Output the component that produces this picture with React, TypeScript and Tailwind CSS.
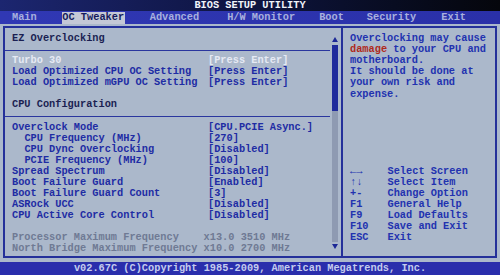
import React from "react";

const mono = { fontFamily: '"Liberation Mono", "DejaVu Sans Mono", monospace' };

type Row = { label: string; value?: string; indent?: boolean; kind?: "sel" | "grey" };

const rowsA: Row[] = [
  { label: "Turbo 30", value: "[Press Enter]", kind: "sel" },
  { label: "Load Optimized CPU OC Setting", value: "[Press Enter]" },
  { label: "Load Optimized mGPU OC Setting", value: "[Press Enter]" },
];

const rowsB: Row[] = [
  { label: "Overclock Mode", value: "[CPU.PCIE Async.]" },
  { label: "CPU Frequency (MHz)", value: "[270]", indent: true },
  { label: "CPU Dync Overclocking", value: "[Disabled]", indent: true },
  { label: "PCIE Frequency (MHz)", value: "[100]", indent: true },
  { label: "Spread Spectrum", value: "[Disabled]" },
  { label: "Boot Failure Guard", value: "[Enabled]" },
  { label: "Boot Failure Guard Count", value: "[3]" },
  { label: "ASRock UCC", value: "[Disabled]" },
  { label: "CPU Active Core Control", value: "[Disabled]" },
];

function RowLine({ r }: { r: Row }) {
  const color = r.kind === "sel" ? "text-[#e6eaf4]" : "text-[#1e2ca4]";
  return (
    <div className={`flex h-[11px] items-center whitespace-pre ${color}`}>
      <div className={`w-[196px] ${r.indent ? "pl-[12.4px]" : ""}`}>{r.label}</div>
      <div>{r.value}</div>
    </div>
  );
}

const keys: [string, string][] = [
  ["←→", "Select Screen"],
  ["↑↓", "Select Item"],
  ["+-", "Change Option"],
  ["F1", "General Help"],
  ["F9", "Load Defaults"],
  ["F10", "Save and Exit"],
  ["ESC", "Exit"],
];

export default function App() {
  return (
    <div
      className="w-[500px] h-[275px] overflow-hidden flex flex-col font-bold text-[10.3px] leading-[11px] bg-[#abb8cb]"
      style={mono}
    >
      {/* title */}
      <div className="h-[11px] flex items-center justify-center bg-gradient-to-r from-[#1c2670] via-[#0e1440] to-[#05060c] text-[#f2f4fa]">
        BIOS SETUP UTILITY
      </div>
      {/* menu */}
      <div className="h-[13px] flex items-center bg-gradient-to-r from-[#3038b4] to-[#2a30a8] text-[#a8b0de] whitespace-pre">
        <div className="ml-[12px]">Main</div>
        <div className="ml-[25px] w-[63px] h-[12px] flex items-center justify-center bg-[#c4c8d6] text-[#141a5c]">OC Tweaker</div>
        <div className="ml-[25px]">Advanced</div>
        <div className="ml-[28px]">H/W Monitor</div>
        <div className="ml-[24px]">Boot</div>
        <div className="ml-[23px]">Security</div>
        <div className="ml-[25px]">Exit</div>
      </div>
      {/* main */}
      <div className="h-[238px] pt-[2px] px-[3px] pb-[4px]">
        <div className="h-full flex border-2 border-[#24309a]">
          {/* left panel */}
          <div className="w-[336px] flex">
            <div className="w-[325px] flex flex-col">
              <div className="pl-[7px] pt-[4.5px] h-[15.5px] text-[#1a1f52] flex items-start">
                <div className="h-[11px] flex items-center">EZ Overclocking</div>
              </div>
              <div className="mt-[6px] h-[1px] bg-[#2a369e]" />
              <div className="pl-[7px] mt-[4px]">
                {rowsA.map((r) => (
                  <RowLine key={r.label} r={r} />
                ))}
                <div className="h-[11px]" />
                <div className="h-[11px] flex items-center text-[#1a1f52]">CPU Configuration</div>
              </div>
              <div className="mt-[6px] h-[1px] bg-[#2a369e]" />
              <div className="pl-[7px] mt-[5px]">
                {rowsB.map((r) => (
                  <RowLine key={r.label} r={r} />
                ))}
                <div className="h-[11px]" />
                <div className="h-[11px] flex items-center whitespace-pre text-[#6f7a94]">
                  {"Processor Maximum Frequency    x13.0 3510 MHz"}
                </div>
                <div className="h-[11px] flex items-center whitespace-pre text-[#6f7a94]">
                  {"North Bridge Maximum Frequency x10.0 2700 MHz"}
                </div>
              </div>
            </div>
            {/* scrollbar */}
            <div className="w-[11px] flex flex-col items-start pl-[2px] pt-[7px] pb-[6px]">
              <div className="w-[6px] h-[8px] flex items-center justify-center">
                <svg width="6" height="5" viewBox="0 0 6 5">
                  <path d="M3 0 L6 5 L0 5 Z" fill="#1c2896" />
                </svg>
              </div>
              <div className="w-[6px] h-[66px] bg-[#1e2a9c] mt-[2px]" />
              <div className="w-[6px] flex-1 bg-[#8e9ab2]" />
              <div className="w-[6px] h-[8px] flex items-center justify-center">
                <svg width="6" height="5" viewBox="0 0 6 5">
                  <path d="M0 0 L6 0 L3 5 Z" fill="#1c2896" />
                </svg>
              </div>
            </div>
          </div>
          {/* right panel */}
          <div className="flex-1 border-l-2 border-[#24309a] pl-[7px] pt-[4.5px] flex flex-col text-[#2232b0]">
            <div className="leading-[11.2px]">
              <div>Overclocking may cause</div>
              <div>
                <span className="text-[#b02a1c]">damage</span> to your CPU and
              </div>
              <div>motherboard.</div>
              <div>It should be done at</div>
              <div>your own risk and</div>
              <div>expense.</div>
            </div>
            <div className="mt-[66px]">
              {keys.map(([k, d]) => (
                <div key={k} className="flex h-[11px] items-center whitespace-pre">
                  <div className="w-[37.5px]">{k}</div>
                  <div>{d}</div>
                </div>
              ))}
            </div>
          </div>
        </div>
      </div>
      {/* bottom */}
      <div className="h-[13px] flex items-center justify-center bg-[#2a2eac] text-[#c4cbee] whitespace-pre">
        v02.67C (C)Copyright 1985-2009, American Megatrends, Inc.
      </div>
    </div>
  );
}
